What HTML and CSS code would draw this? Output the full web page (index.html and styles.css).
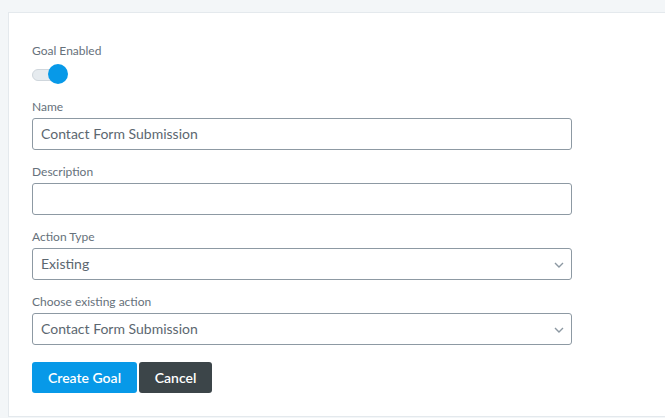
FILE: index.html
```html
<!DOCTYPE html>
<html>
<head>
<meta charset="utf-8">
<link rel="stylesheet" href="styles.css">
</head>
<body>
<div class="page">
  <form class="card">
    <div class="group toggle-group">
      <label class="label">Goal Enabled</label>
      <span class="toggle"><span class="track"></span><span class="knob"></span></span>
    </div>
    <div class="group">
      <label class="label">Name</label>
      <div class="field">Contact Form Submission</div>
    </div>
    <div class="group">
      <label class="label">Description</label>
      <div class="field"></div>
    </div>
    <div class="group">
      <label class="label">Action Type</label>
      <div class="field select">Existing
        <svg class="chev" width="10" height="6" viewBox="0 0 10 6"><path d="M1 1 L5 5 L9 1" fill="none" stroke="#8c98a2" stroke-width="1.4"/></svg>
      </div>
    </div>
    <div class="group">
      <label class="label">Choose existing action</label>
      <div class="field select">Contact Form Submission
        <svg class="chev" width="10" height="6" viewBox="0 0 10 6"><path d="M1 1 L5 5 L9 1" fill="none" stroke="#8c98a2" stroke-width="1.4"/></svg>
      </div>
    </div>
    <div class="actions">
      <button type="button" class="btn primary">Create Goal</button>
      <button type="button" class="btn dark">Cancel</button>
    </div>
  </form>
</div>
</body>
</html>
```

FILE: styles.css
```css
html, body {
  margin: 0;
  padding: 0;
  background: #f3f6f8;
  font-family: Lato, "Open Sans", sans-serif;
}
.page {
  padding: 12px 0 0 8px;
  height: 418px;
  box-sizing: border-box;
  overflow: hidden;
}
.card {
  background: #fff;
  border: 1px solid #e4e9ed;
  border-right: none;
  padding: 30px 0 23px 23px;
  width: 700px;
  box-sizing: border-box;
}
.group {
  width: 540px;
  margin-bottom: 14px;
}
.label {
  display: block;
  font-size: 12px;
  line-height: 15px;
  color: #66717b;
  margin-bottom: 4px;
}
.toggle-group {
  margin-bottom: 14px;
}
.toggle {
  display: block;
  position: relative;
  width: 36px;
  height: 21px;
  margin-top: 6px;
}
.track {
  position: absolute;
  left: 0;
  top: 5px;
  width: 24px;
  height: 10px;
  border: 1px solid #cfd6dc;
  background: #e6ebef;
  border-radius: 6px;
}
.knob {
  position: absolute;
  left: 16px;
  top: 0;
  width: 20px;
  height: 20px;
  border-radius: 50%;
  background: #0799e8;
}
.field {
  position: relative;
  height: 32px;
  box-sizing: border-box;
  border: 1px solid #8d99a3;
  border-radius: 3px;
  padding: 0 8px;
  font-size: 14px;
  line-height: 30px;
  color: #5c6770;
}
.chev {
  position: absolute;
  right: 7px;
  top: 13px;
}
.actions {
  display: flex;
  gap: 2px;
  margin-top: 17px;
}
.btn {
  border: none;
  border-radius: 3px;
  height: 31px;
  font-family: Lato, "Open Sans", sans-serif;
  font-size: 14px;
  font-weight: 600;
  color: #fff;
  padding: 0 15px;
  cursor: pointer;
}
.primary {
  background: #0799e8;
  width: 105px;
}
.dark {
  background: #3c4549;
  width: 73px;
}
```
